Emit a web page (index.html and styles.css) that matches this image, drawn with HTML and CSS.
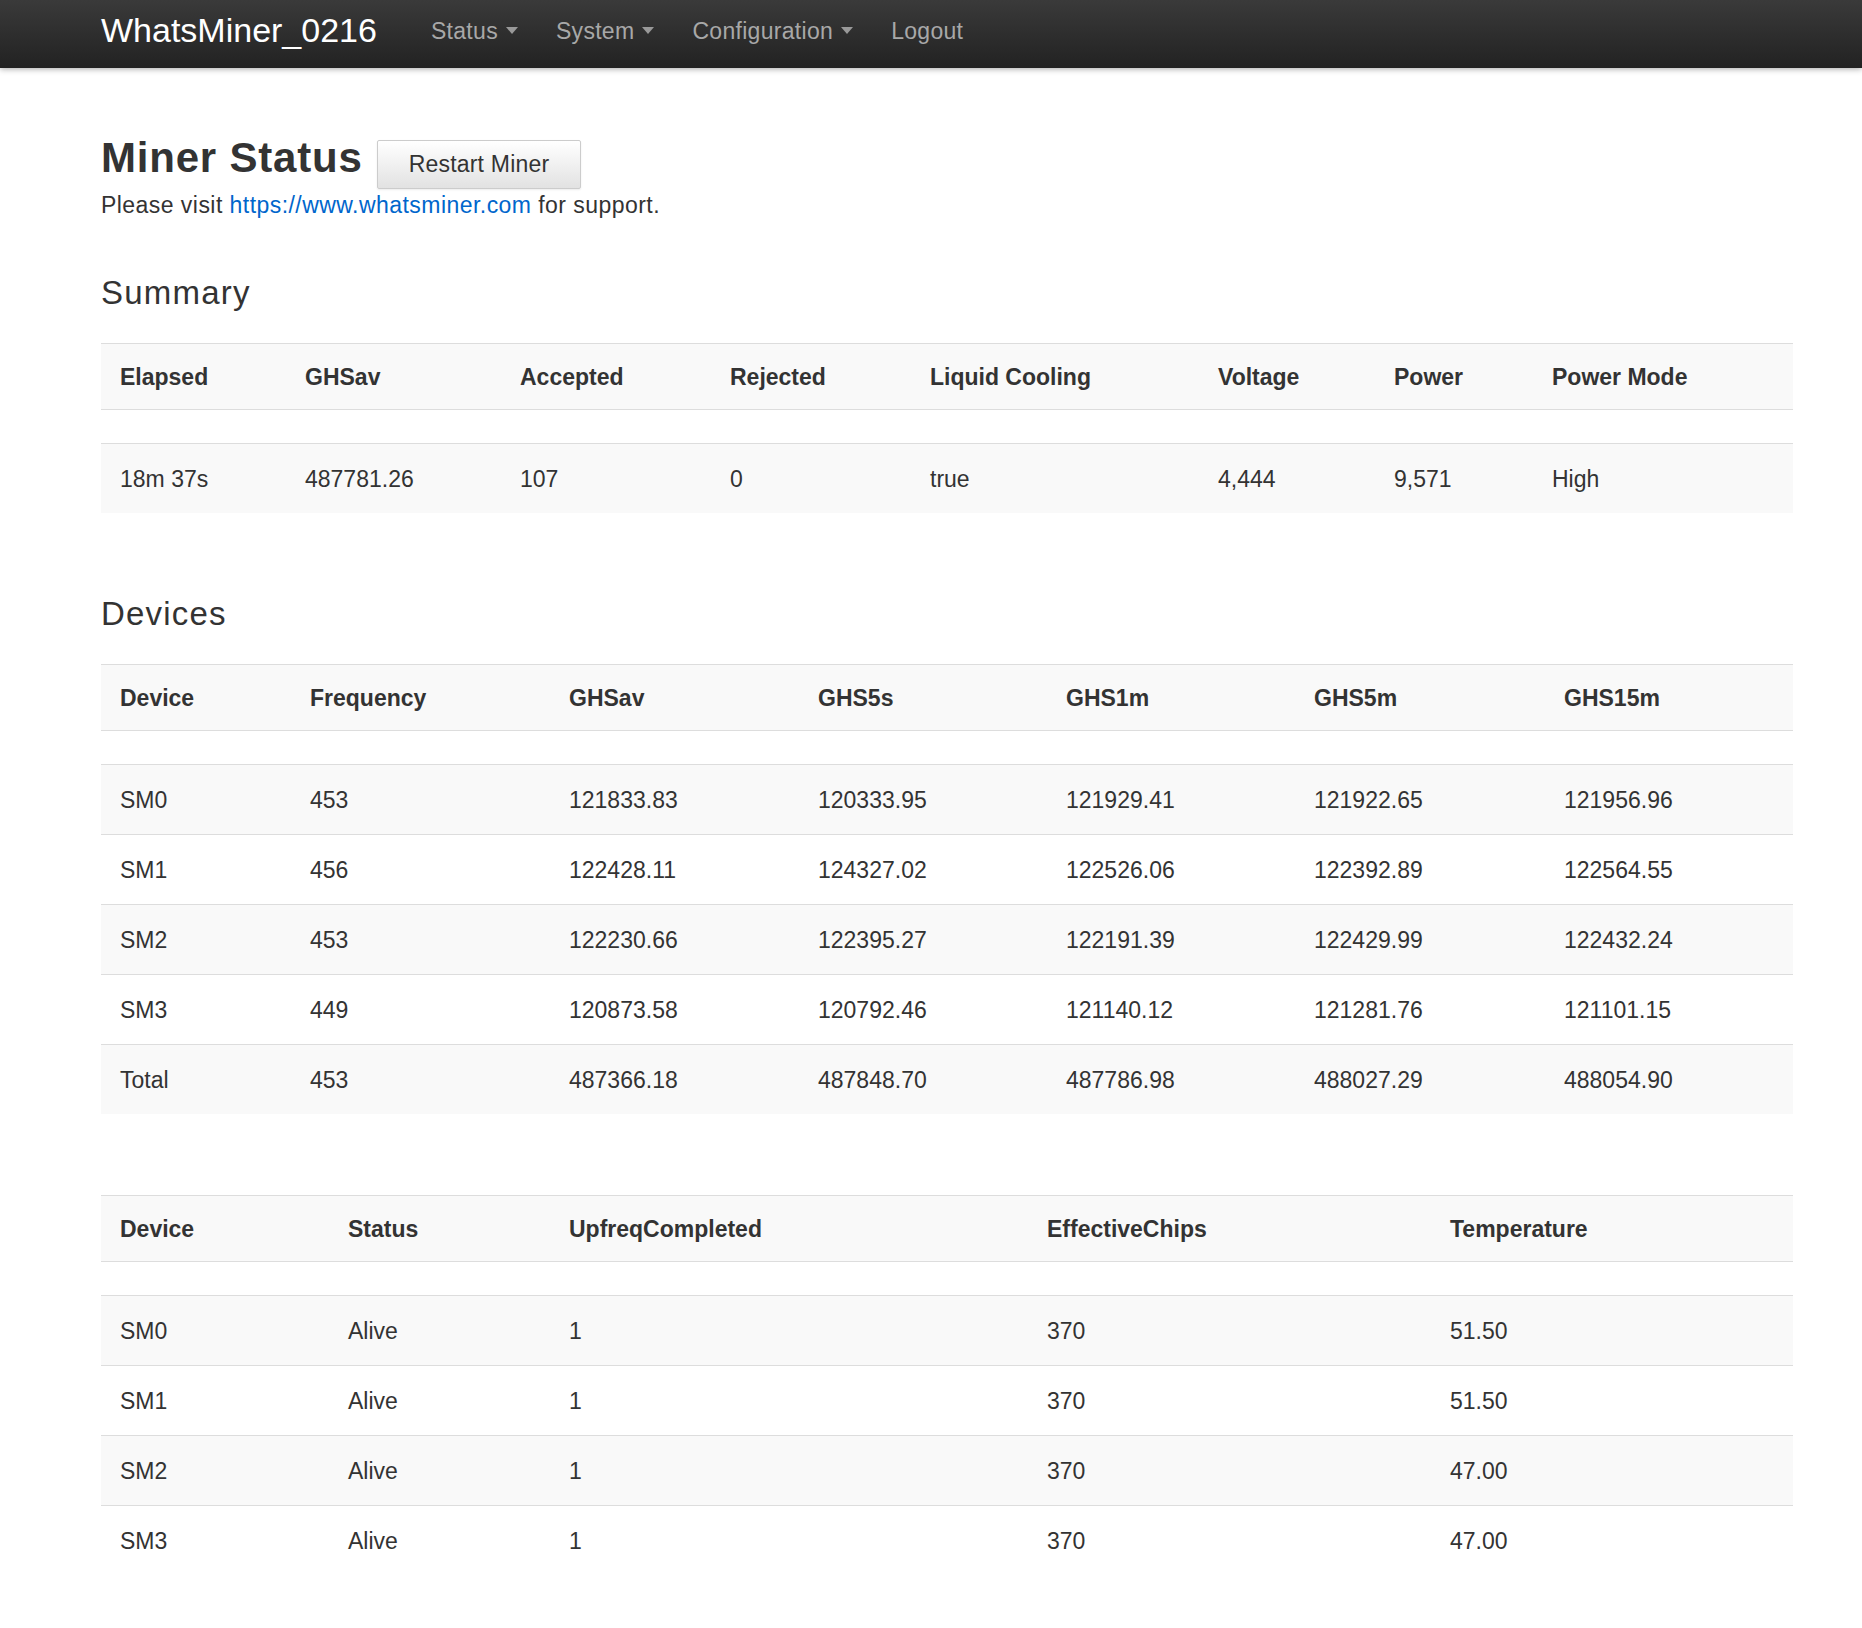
FILE: index.html
```html
<!DOCTYPE html>
<html lang="en">
<head>
<meta charset="utf-8">
<title>WhatsMiner_0216 - Miner Status</title>
<link rel="stylesheet" href="styles.css">
</head>
<body>
<header class="navbar">
  <div class="nav-inner">
    <a class="brand" href="#">WhatsMiner_0216</a>
    <ul class="nav">
      <li><a href="#">Status<span class="caret"></span></a></li>
      <li><a href="#">System<span class="caret"></span></a></li>
      <li><a href="#">Configuration<span class="caret"></span></a></li>
      <li><a href="#">Logout</a></li>
    </ul>
  </div>
</header>

<main class="container">
  <div class="title-row">
    <h2 class="page-title">Miner Status</h2>
    <button class="btn" type="button">Restart Miner</button>
  </div>
  <p class="support">Please visit <a href="#">https://www.whatsminer.com</a> for support.</p>

  <h3 class="section-title">Summary</h3>
  <table class="grid">
    <colgroup>
      <col class="s1"><col class="s2"><col class="s3"><col class="s4"><col class="s5"><col class="s6"><col class="s7"><col class="s8">
    </colgroup>
    <tbody>
      <tr class="head"><th>Elapsed</th><th>GHSav</th><th>Accepted</th><th>Rejected</th><th>Liquid Cooling</th><th>Voltage</th><th>Power</th><th>Power Mode</th></tr>
      <tr class="gap"><td colspan="8"></td></tr>
      <tr><td>18m 37s</td><td>487781.26</td><td>107</td><td>0</td><td>true</td><td>4,444</td><td>9,571</td><td>High</td></tr>
    </tbody>
  </table>

  <h3 class="section-title">Devices</h3>
  <table class="grid">
    <colgroup>
      <col class="d1"><col class="d2"><col class="d3"><col class="d4"><col class="d5"><col class="d6"><col class="d7">
    </colgroup>
    <tbody>
      <tr class="head"><th>Device</th><th>Frequency</th><th>GHSav</th><th>GHS5s</th><th>GHS1m</th><th>GHS5m</th><th>GHS15m</th></tr>
      <tr class="gap"><td colspan="7"></td></tr>
      <tr><td>SM0</td><td>453</td><td>121833.83</td><td>120333.95</td><td>121929.41</td><td>121922.65</td><td>121956.96</td></tr>
      <tr><td>SM1</td><td>456</td><td>122428.11</td><td>124327.02</td><td>122526.06</td><td>122392.89</td><td>122564.55</td></tr>
      <tr><td>SM2</td><td>453</td><td>122230.66</td><td>122395.27</td><td>122191.39</td><td>122429.99</td><td>122432.24</td></tr>
      <tr><td>SM3</td><td>449</td><td>120873.58</td><td>120792.46</td><td>121140.12</td><td>121281.76</td><td>121101.15</td></tr>
      <tr><td>Total</td><td>453</td><td>487366.18</td><td>487848.70</td><td>487786.98</td><td>488027.29</td><td>488054.90</td></tr>
    </tbody>
  </table>

  <table class="grid last">
    <colgroup>
      <col class="t1"><col class="t2"><col class="t3"><col class="t4"><col class="t5">
    </colgroup>
    <tbody>
      <tr class="head"><th>Device</th><th>Status</th><th>UpfreqCompleted</th><th>EffectiveChips</th><th>Temperature</th></tr>
      <tr class="gap"><td colspan="5"></td></tr>
      <tr><td>SM0</td><td>Alive</td><td>1</td><td>370</td><td>51.50</td></tr>
      <tr><td>SM1</td><td>Alive</td><td>1</td><td>370</td><td>51.50</td></tr>
      <tr><td>SM2</td><td>Alive</td><td>1</td><td>370</td><td>47.00</td></tr>
      <tr><td>SM3</td><td>Alive</td><td>1</td><td>370</td><td>47.00</td></tr>
    </tbody>
  </table>
</main>
</body>
</html>
```

FILE: styles.css
```css
html, body {
  margin: 0;
  padding: 0;
}

body {
  font-family: "Liberation Sans", Arial, Helvetica, sans-serif;
  font-size: 23px;
  color: #333333;
  background: #ffffff;
}

/* ---------- navbar ---------- */
.navbar {
  position: relative;
  height: 68px;
  background: linear-gradient(to bottom, #3a3a3a 0%, #222222 100%);
  box-shadow: 0 1px 6px rgba(0, 0, 0, 0.35);
}

.nav-inner {
  display: flex;
  align-items: flex-start;
  padding-left: 101px;
}

.brand {
  display: block;
  padding-top: 13px;
  font-size: 34px;
  line-height: 34px;
  color: #ffffff;
  text-decoration: none;
}

.nav {
  display: flex;
  list-style: none;
  margin: 0 0 0 35px;
  padding: 0;
}

.nav a {
  display: block;
  padding: 15px 19px 0;
  font-size: 23px;
  line-height: 32px;
  letter-spacing: 0.3px;
  color: #a8a8a8;
  text-decoration: none;
}

.caret {
  display: inline-block;
  width: 0;
  height: 0;
  margin-left: 8px;
  vertical-align: 5px;
  border-top: 7px solid #999999;
  border-left: 6.5px solid transparent;
  border-right: 6.5px solid transparent;
}

/* ---------- content ---------- */
.container {
  width: 1692px;
  margin-left: 101px;
  padding: 67px 0 40px;
}

.title-row {
  display: flex;
  align-items: baseline;
  gap: 14px;
}

.page-title {
  margin: 0;
  font-size: 42px;
  line-height: 46px;
  font-weight: bold;
  letter-spacing: 0.8px;
  color: #333333;
}

.btn {
  font-family: inherit;
  font-size: 23px;
  line-height: 33px;
  padding: 7px 31px;
  letter-spacing: 0.2px;
  color: #333333;
  background: linear-gradient(to bottom, #ffffff 0%, #e2e2e2 100%);
  border: 1px solid #cccccc;
  border-radius: 2px;
  box-shadow: 0 1px 2px rgba(0, 0, 0, 0.08);
  cursor: pointer;
}

.support {
  margin: 0 0 52px;
  line-height: 32px;
  letter-spacing: 0.45px;
}

.support a {
  color: #0066cc;
  text-decoration: none;
}

.section-title {
  margin: 0 0 30px;
  font-size: 33px;
  line-height: 40px;
  font-weight: normal;
  letter-spacing: 1.2px;
  color: #333333;
}

/* ---------- tables ---------- */
.grid {
  width: 1692px;
  table-layout: fixed;
  border-collapse: collapse;
  margin-bottom: 81px;
}

.grid.last {
  margin-bottom: 0;
}

.grid tr:nth-child(odd) {
  background: #f9f9f9;
}

.grid th,
.grid td {
  text-align: left;
  border-top: 1px solid #dddddd;
  line-height: 32px;
  white-space: nowrap;
}

.grid th {
  padding: 17px 19px 16px;
  font-weight: bold;
}

.grid td {
  padding: 19px 19px 18px;
}

.grid .gap td {
  padding: 0;
  height: 33px;
}

/* summary columns */
.s1 { width: 185px; }
.s2 { width: 215px; }
.s3 { width: 210px; }
.s4 { width: 200px; }
.s5 { width: 288px; }
.s6 { width: 176px; }
.s7 { width: 158px; }
.s8 { width: 260px; }

/* devices columns */
.d1 { width: 190px; }
.d2 { width: 259px; }
.d3 { width: 249px; }
.d4 { width: 248px; }
.d5 { width: 248px; }
.d6 { width: 250px; }
.d7 { width: 248px; }

/* device status columns */
.t1 { width: 228px; }
.t2 { width: 221px; }
.t3 { width: 478px; }
.t4 { width: 403px; }
.t5 { width: 362px; }
```
